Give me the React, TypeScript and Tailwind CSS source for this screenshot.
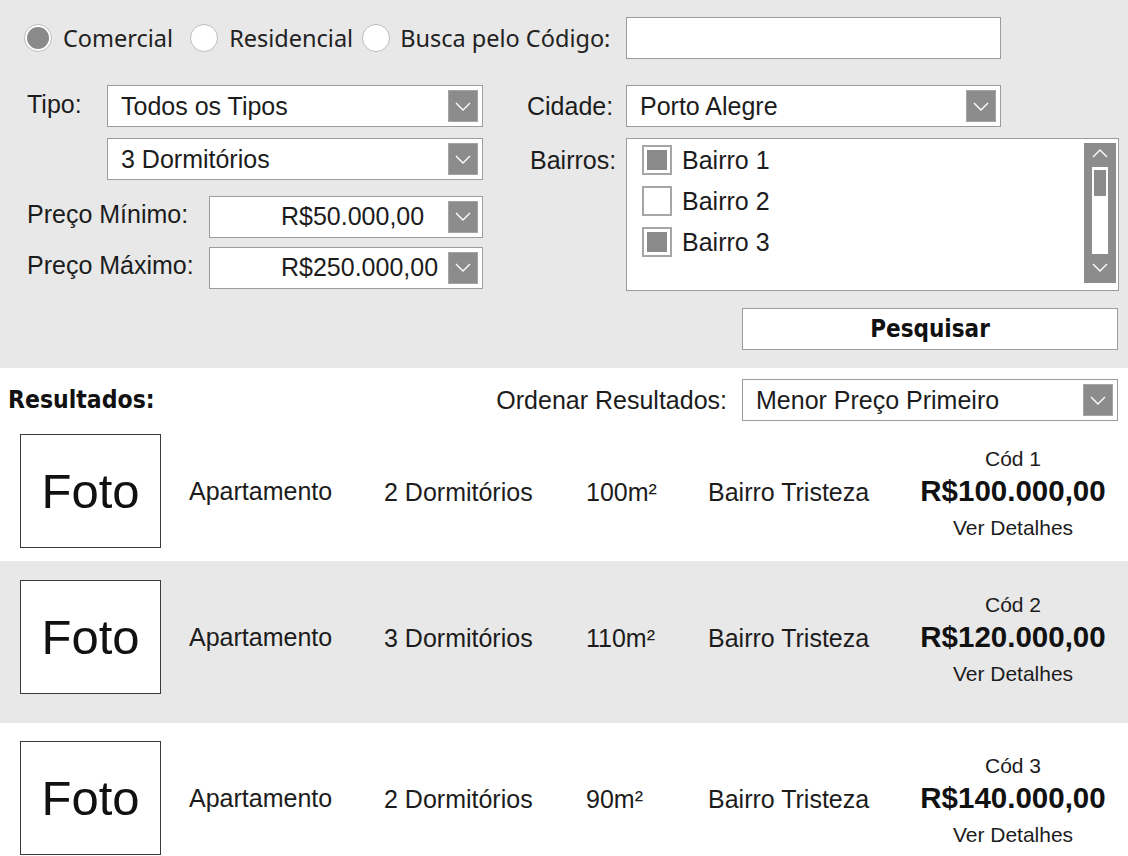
import React from "react";

const arial = { fontFamily: '"Liberation Sans", Arial, sans-serif' };

function Chevron({ up = false }: { up?: boolean }) {
  return (
    <svg width="16" height="9" viewBox="0 0 16 9" fill="none">
      <polyline
        points={up ? "1,8 8,1 15,8" : "1,1 8,8 15,1"}
        stroke="white"
        strokeWidth="1.4"
        fill="none"
      />
    </svg>
  );
}

function ArrowBox() {
  return (
    <div className="mr-[4px] flex h-[32px] w-[30px] shrink-0 items-center justify-center border border-[#a4a4a4] bg-[#8c8c8c]">
      <Chevron />
    </div>
  );
}

function Select({
  w,
  text,
  pl,
}: {
  w: string;
  text: string;
  pl: string;
}) {
  return (
    <div className={`flex h-[42px] items-center border border-[#9c9c9c] bg-white ${w}`}>
      <span className={`flex-1 text-[25px] leading-none text-[#1c1c1c] ${pl}`}>{text}</span>
      <ArrowBox />
    </div>
  );
}

function Radio({ checked }: { checked?: boolean }) {
  return (
    <div className="flex h-[28px] w-[28px] shrink-0 items-center justify-center rounded-full border border-[#bdbdbd] bg-white">
      {checked && <div className="h-[22px] w-[22px] rounded-full bg-[#8a8a8a]" />}
    </div>
  );
}

function Check({ checked }: { checked?: boolean }) {
  return (
    <div className="flex h-[30px] w-[30px] shrink-0 items-center justify-center border-2 border-[#a6a6a6] bg-white">
      {checked && <div className="h-[20px] w-[20px] bg-[#8a8a8a]" />}
    </div>
  );
}

type Row = {
  cod: string;
  dorm: string;
  area: string;
  price: string;
};

function ResultRow({ r, gray, h, pt }: { r: Row; gray?: boolean; h: string; pt: string }) {
  return (
    <div className={`${h} ${pt} ${gray ? "bg-[#e8e8e8]" : "bg-white"}`}>
      <div className="flex h-[114px] items-center">
        <div className="ml-[20px] flex h-[114px] w-[141px] shrink-0 items-center justify-center border border-[#3a3a3a] bg-white">
          <span className="text-[49px] leading-none text-[#111]">Foto</span>
        </div>
        <div className="ml-[28px] w-[195px] shrink-0 text-[25px] leading-none">Apartamento</div>
        <div className="w-[202px] shrink-0 pt-[3px] text-[25px] leading-none">{r.dorm}</div>
        <div className="w-[122px] shrink-0 pt-[3px] text-[25px] leading-none">{r.area}</div>
        <div className="w-[200px] shrink-0 pt-[3px] text-[25px] leading-none">Bairro Tristeza</div>
        <div className="flex w-[210px] shrink-0 flex-col items-center pt-[4px]">
          <div className="text-[21px] leading-[24px]">{r.cod}</div>
          <div className="mt-[3px] text-[29.5px] font-bold leading-[34px] text-[#111]">{r.price}</div>
          <div className="mt-[8px] text-[21px] leading-[24px]">Ver Detalhes</div>
        </div>
      </div>
    </div>
  );
}

export default function App() {
  const radioFont = { fontFamily: '"Noto Sans", "Open Sans", sans-serif' };
  const boldFont = { fontFamily: '"DejaVu Sans Condensed", "DejaVu Sans", sans-serif' };
  const rows: Row[] = [
    { cod: "Cód 1", dorm: "2 Dormitórios", area: "100m²", price: "R$100.000,00" },
    { cod: "Cód 2", dorm: "3 Dormitórios", area: "110m²", price: "R$120.000,00" },
    { cod: "Cód 3", dorm: "2 Dormitórios", area: "90m²", price: "R$140.000,00" },
  ];
  return (
    <div className="h-[856px] w-[1128px] overflow-hidden bg-white text-[#1c1c1c]" style={arial}>
      {/* Filter panel */}
      <div className="h-[368px] bg-[#e8e8e8] pt-[17px]">
        <div className="flex h-[42px] items-center pl-[24px]" style={radioFont}>
          <Radio checked />
          <span className="ml-[11px] translate-y-[1px] text-[23.5px] leading-none text-[#222]">Comercial</span>
          <div className="ml-[17px]"><Radio /></div>
          <span className="ml-[11px] translate-y-[1px] text-[23.5px] leading-none text-[#222]">Residencial</span>
          <div className="ml-[9px]"><Radio /></div>
          <span className="ml-[10px] translate-y-[1px] text-[23.5px] leading-none text-[#222]">Busca pelo Código:</span>
          <div className="ml-auto mr-[127px] h-[42px] w-[375px] border border-[#9c9c9c] bg-white" />
        </div>

        <div className="mt-[26px] flex">
          {/* left column */}
          <div className="ml-[27px] w-[456px] shrink-0">
            <div className="flex h-[42px] items-center">
              <span className="w-[80px] shrink-0 -translate-y-[2px] text-[25px] leading-none">Tipo:</span>
              <Select w="w-[376px]" text="Todos os Tipos" pl="pl-[13px]" />
            </div>
            <div className="mt-[11px] flex h-[42px] items-center pl-[80px]">
              <Select w="w-[376px]" text="3 Dormitórios" pl="pl-[13px]" />
            </div>
            <div className="mt-[15px] flex h-[43px] items-center">
              <span className="w-[182px] shrink-0 -translate-y-[2px] text-[25px] leading-none">Preço Mínimo:</span>
              <Select w="w-[274px]" text="R$50.000,00" pl="pl-[71px]" />
            </div>
            <div className="mt-[8px] flex h-[43px] items-center">
              <span className="w-[182px] shrink-0 -translate-y-[2px] text-[25px] leading-none">Preço Máximo:</span>
              <Select w="w-[274px]" text="R$250.000,00" pl="pl-[71px]" />
            </div>
          </div>

          {/* right column */}
          <div className="ml-[44px] w-[592px] shrink-0">
            <div className="flex h-[42px] items-center">
              <span className="w-[99px] shrink-0 text-[25px] leading-none">Cidade:</span>
              <Select w="w-[375px]" text="Porto Alegre" pl="pl-[13px]" />
            </div>
            <div className="mt-[11px] flex">
              <span className="w-[99px] shrink-0 pl-[3px] pt-[10px] text-[25px] leading-none">Bairros:</span>
              <div className="flex h-[153px] w-[493px] justify-between border border-[#9c9c9c] bg-white pl-[15px] pr-[2px] pt-[6px]">
                <div className="flex flex-col gap-[11px]">
                  {[
                    ["Bairro 1", true],
                    ["Bairro 2", false],
                    ["Bairro 3", true],
                  ].map(([t, c]) => (
                    <div key={t as string} className="flex h-[30px] items-center">
                      <Check checked={c as boolean} />
                      <span className="ml-[10px] text-[25px] leading-none">{t as string}</span>
                    </div>
                  ))}
                </div>
                <div className="mt-[-2px] flex h-[140px] w-[32px] flex-col items-center bg-[#8c8c8c]">
                  <div className="mt-[6px]"><Chevron up /></div>
                  <div className="mt-[9px] h-[87px] w-[16px] bg-white px-[2px] pt-[3px]">
                    <div className="h-[26px] w-full bg-[#8c8c8c]" />
                  </div>
                  <div className="mt-[9px]"><Chevron /></div>
                </div>
              </div>
            </div>
            <div className="ml-[215px] mt-[17px] flex h-[42px] w-[376px] items-center justify-center border border-[#9c9c9c] bg-white">
              <span className="text-[24px] font-bold leading-none text-[#111]" style={boldFont}>
                Pesquisar
              </span>
            </div>
          </div>
        </div>
      </div>

      {/* Results header */}
      <div className="flex h-[57px] items-start pt-[11px]">
        <div className="flex h-[42px] w-full items-center">
          <span className="ml-[8px] text-[24.5px] font-bold leading-none text-[#111]" style={boldFont}>
            Resultados:
          </span>
          <span className="ml-auto text-[25px] leading-none">Ordenar Resultados:</span>
          <div className="ml-[15px] mr-[10px]">
            <Select w="w-[376px]" text="Menor Preço Primeiro" pl="pl-[13px]" />
          </div>
        </div>
      </div>

      <ResultRow r={rows[0]} h="h-[136px]" pt="pt-[9px]" />
      <ResultRow r={rows[1]} gray h="h-[162px]" pt="pt-[19px]" />
      <ResultRow r={rows[2]} h="h-[133px]" pt="pt-[18px]" />
    </div>
  );
}
